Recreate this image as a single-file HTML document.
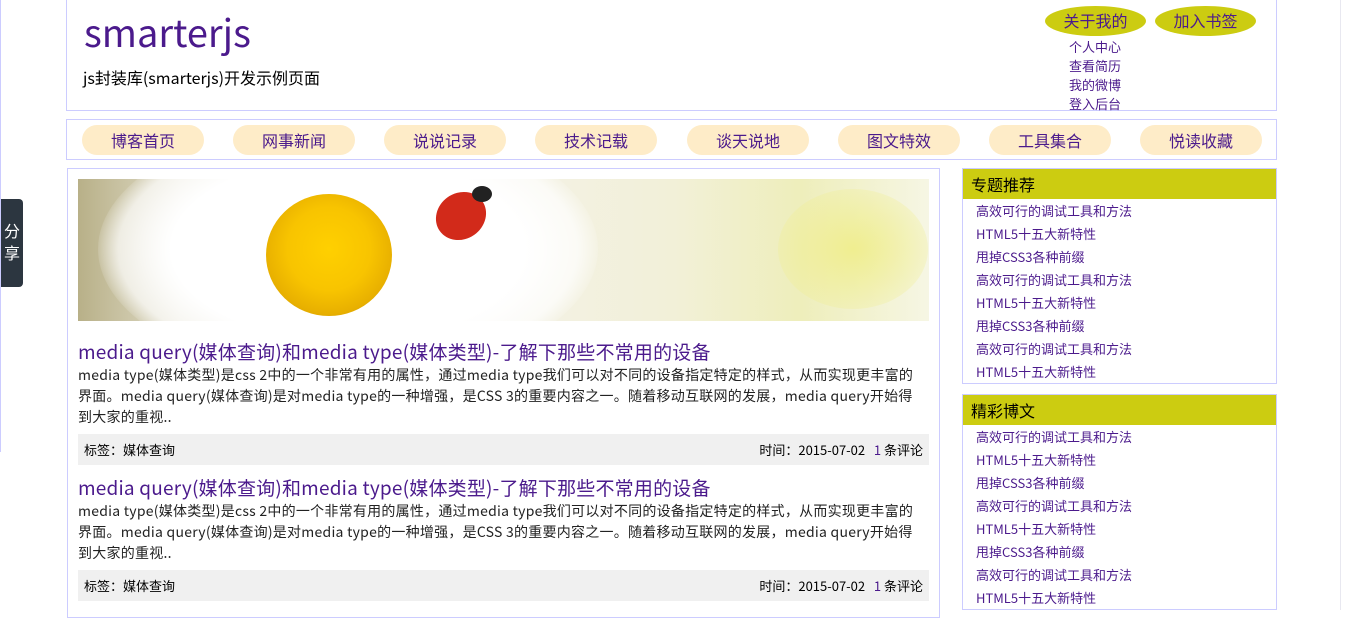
<!DOCTYPE html>
<html><head><meta charset="utf-8"><style>
*{margin:0;padding:0;box-sizing:border-box}
body{width:1345px;height:610px;overflow:hidden;background:#fff;font-family:"Noto Sans CJK SC","Liberation Sans",sans-serif;position:relative;color:#000}
.abs{position:absolute}
.b{border:1px solid #ccccff}
.pill{position:absolute;top:5px;width:122px;height:30px;border-radius:15px;background:#feecc8;color:#4b1a8c;font-size:16px;text-align:center;line-height:30px}
.side{position:absolute;left:962px;width:315px;border:1px solid #ccccff}
.side h3{background:#cccc11;height:30px;line-height:30px;font-weight:normal;font-size:16px;padding-left:8px}
.side p{font-size:13px;color:#4b1a8c;line-height:23px;padding-left:13px;white-space:nowrap}
.art h2{font-weight:normal;font-size:19px;color:#4b1a8c;line-height:24px;white-space:nowrap;letter-spacing:0.2px}
.art .t{font-size:14px;line-height:21px;color:#222;margin-top:1px;letter-spacing:0.25px;padding-right:6px}
.art .f{background:#f0f0f0;height:31px;margin-top:6px;font-size:13px;line-height:31px;padding:0 6px;display:flex;justify-content:space-between}
</style></head><body>
<div class="abs" style="left:0;top:0;width:1px;height:452px;background:#ccccff"></div>
<div class="abs" style="left:1340px;top:0;width:1px;height:610px;background:#e8e8f0"></div>
<div class="abs b" style="left:66px;top:-1px;width:1211px;height:112px">
<div class="abs" style="left:17px;top:3px;font-size:38px;color:#4b1a8c;line-height:56px">smarterjs</div>
<div class="abs" style="left:16px;top:65px;font-size:16px;line-height:24px">js封装库(smarterjs)开发示例页面</div>
<div class="abs" style="left:978px;top:6px;width:101px;height:30px;border-radius:50%;background:#cccc11;color:#4b1a8c;font-size:16px;text-align:center;line-height:28px">关于我的</div>
<div class="abs" style="left:1088px;top:6px;width:101px;height:30px;border-radius:50%;background:#cccc11;color:#4b1a8c;font-size:16px;text-align:center;line-height:28px">加入书签</div>
<div class="abs" style="left:1002px;top:37px;font-size:13px;line-height:19px;color:#4b1a8c">个人中心<br>查看简历<br>我的微博<br>登入后台</div>
</div>
<div class="abs b" style="left:66px;top:119px;width:1211px;height:41px">
<div class="pill" style="left:15px">博客首页</div><div class="pill" style="left:166px">网事新闻</div><div class="pill" style="left:317px">说说记录</div><div class="pill" style="left:468px">技术记载</div><div class="pill" style="left:620px">谈天说地</div><div class="pill" style="left:771px">图文特效</div><div class="pill" style="left:922px">工具集合</div><div class="pill" style="left:1073px">悦读收藏</div>
</div>
<div class="abs" style="left:1px;top:199px;width:22px;height:88px;background:#2c3640;border-radius:0 4px 4px 0;color:#fff;font-size:16px;line-height:22px;text-align:center;padding-top:20px">分<br>享</div>
<div class="abs b" style="left:67px;top:168px;width:873px;height:450px">
<div class="abs" style="left:10px;top:10px;width:851px;height:142px;overflow:hidden;background:linear-gradient(90deg,#b8b088 0%,#e0dcc8 12%,#f4f2ea 45%,#f2f0d8 70%,#eeeebb 85%,#f6f6e4 100%)">
<div class="abs" style="left:20px;top:-60px;width:500px;height:260px;border-radius:50%;background:radial-gradient(ellipse at center,#fff 50%,rgba(255,255,255,0.7) 65%,rgba(255,255,255,0) 72%)"></div>
<div class="abs" style="left:188px;top:15px;width:126px;height:122px;border-radius:50%;background:radial-gradient(circle at 50% 45%,#ffd000 0%,#f8c400 45%,#e8b000 70%,#d09800 85%,rgba(255,255,255,0) 92%)"></div>
<div class="abs" style="left:357px;top:14px;width:52px;height:46px;border-radius:50%;background:#d22a1a;transform:rotate(-35deg)"></div>
<div class="abs" style="left:394px;top:7px;width:20px;height:16px;border-radius:50%;background:#222"></div>
<div class="abs" style="left:700px;top:10px;width:150px;height:120px;border-radius:50%;background:radial-gradient(#f0ee90,rgba(240,238,170,0))"></div>
</div>
<div class="art abs" style="left:10px;top:171px;width:851px">
<h2>media query(媒体查询)和media type(媒体类型)-了解下那些不常用的设备</h2>
<div class="t">media type(媒体类型)是css 2中的一个非常有用的属性，通过media type我们可以对不同的设备指定特定的样式，从而实现更丰富的界面。media query(媒体查询)是对media type的一种增强，是CSS 3的重要内容之一。随着移动互联网的发展，media query开始得到大家的重视..</div>
<div class="f"><span>标签：媒体查询</span><span>时间：2015-07-02 &nbsp;&nbsp;<span style="color:#4b1a8c">1</span> 条评论</span></div>
</div>
<div class="art abs" style="left:10px;top:307px;width:851px">
<h2>media query(媒体查询)和media type(媒体类型)-了解下那些不常用的设备</h2>
<div class="t">media type(媒体类型)是css 2中的一个非常有用的属性，通过media type我们可以对不同的设备指定特定的样式，从而实现更丰富的界面。media query(媒体查询)是对media type的一种增强，是CSS 3的重要内容之一。随着移动互联网的发展，media query开始得到大家的重视..</div>
<div class="f"><span>标签：媒体查询</span><span>时间：2015-07-02 &nbsp;&nbsp;<span style="color:#4b1a8c">1</span> 条评论</span></div>
</div>
</div>
<div class="side" style="top:168px;height:216px"><h3>专题推荐</h3>
<p>高效可行的调试工具和方法</p><p>HTML5十五大新特性</p><p>甩掉CSS3各种前缀</p><p>高效可行的调试工具和方法</p><p>HTML5十五大新特性</p><p>甩掉CSS3各种前缀</p><p>高效可行的调试工具和方法</p><p>HTML5十五大新特性</p></div>
<div class="side" style="top:394px;height:216px"><h3>精彩博文</h3>
<p>高效可行的调试工具和方法</p><p>HTML5十五大新特性</p><p>甩掉CSS3各种前缀</p><p>高效可行的调试工具和方法</p><p>HTML5十五大新特性</p><p>甩掉CSS3各种前缀</p><p>高效可行的调试工具和方法</p><p>HTML5十五大新特性</p></div>
</body></html>
